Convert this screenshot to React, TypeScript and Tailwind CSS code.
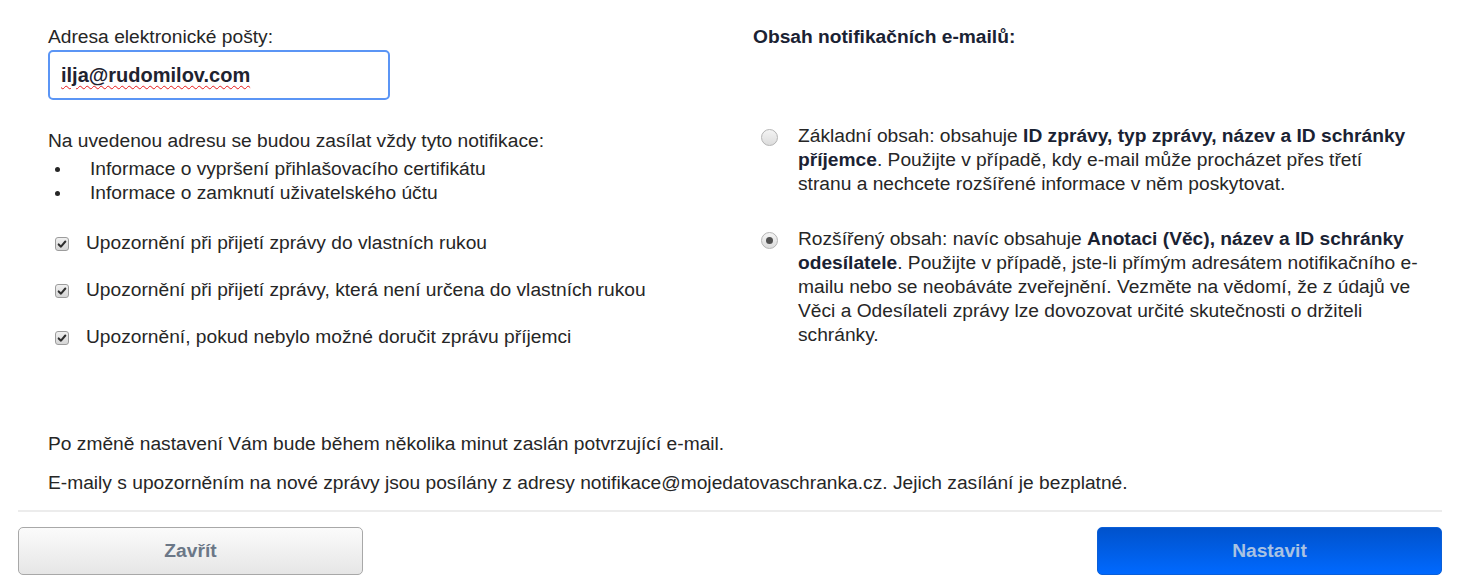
import React from 'react';

const font = { fontFamily: '"Liberation Sans", Arial, sans-serif' };

function Check() {
  return (
    <span className="mt-[1px] flex h-[14px] w-[14px] shrink-0 items-center justify-center rounded-[3px] border border-[#9c9c9c] bg-gradient-to-b from-[#f0f0f0] to-[#d6d6d6]">
      <svg viewBox="0 0 12 12" className="h-[10px] w-[10px]">
        <path d="M2 6.5 L4.8 9.2 L10 3" fill="none" stroke="#2e2e2e" strokeWidth="2.4" strokeLinecap="round" strokeLinejoin="round" />
      </svg>
    </span>
  );
}

function Radio({ checked }: { checked?: boolean }) {
  return (
    <span className="mt-[5px] flex h-[17px] w-[17px] shrink-0 items-center justify-center rounded-full border border-[#b4b4b4] bg-gradient-to-b from-[#f4f4f4] to-[#dcdcdc]">
      {checked && <span className="h-[7px] w-[7px] rounded-full bg-[#505050]" />}
    </span>
  );
}

const checks = [
  'Upozornění při přijetí zprávy do vlastních rukou',
  'Upozornění při přijetí zprávy, která není určena do vlastních rukou',
  'Upozornění, pokud nebylo možné doručit zprávu příjemci',
];

export default function App() {
  return (
    <div className="min-h-[585px] bg-white text-[19.2px] leading-6 text-[#262626]" style={font}>
      <div className="ml-[18px] w-[1424px] pt-[25px]">
        <div className="grid grid-cols-2">
          <div className="pl-[30px]">
            <div>Adresa elektronické pošty:</div>
            <div className="mt-[1px] flex h-[50px] w-[342px] items-center rounded-[5px] border-2 border-[#5b95f5] px-[11px] text-[20px] font-bold text-[#1f2330]">
              <span className="underline decoration-wavy decoration-[#e81818] decoration-1 underline-offset-[3px]">ilja@rudomilov.com</span>
            </div>
            <p className="mt-[29px]">Na uvedenou adresu se budou zasílat vždy tyto notifikace:</p>
            <ul className="mt-[4px]">
              <li className="flex items-center">
                <span className="ml-[7px] h-[5px] w-[5px] rounded-full bg-[#262626]" />
                <span className="ml-[30px]">Informace o vypršení přihlašovacího certifikátu</span>
              </li>
              <li className="flex items-center">
                <span className="ml-[7px] h-[5px] w-[5px] rounded-full bg-[#262626]" />
                <span className="ml-[30px]">Informace o zamknutí uživatelského účtu</span>
              </li>
            </ul>
            <div className="mt-[26px] flex flex-col gap-[23px]">
              {checks.map((c) => (
                <label key={c} className="flex items-center pl-[7px]">
                  <Check />
                  <span className="ml-[17px]">{c}</span>
                </label>
              ))}
            </div>
          </div>

          <div className="pl-[23px] pr-[22px]">
            <div className="font-bold text-[#1a2233]">Obsah notifikačních e-mailů:</div>
            <div className="mt-[75px] flex items-start pl-[8px]">
              <Radio />
              <p className="ml-[20px]">
                Základní obsah: obsahuje <b className="text-[#1a2233]">ID zprávy, typ zprávy, název a ID schránky příjemce</b>. Použijte v případě, kdy e-mail může procházet přes třetí stranu a nechcete rozšířené informace v něm poskytovat.
              </p>
            </div>
            <div className="mt-[31px] flex items-start pl-[8px]">
              <Radio checked />
              <p className="ml-[20px]">
                Rozšířený obsah: navíc obsahuje <b className="text-[#1a2233]">Anotaci (Věc), název a ID schránky odesílatele</b>. Použijte v případě, jste-li přímým adresátem notifikačního e-mailu nebo se neobáváte zveřejnění. Vezměte na vědomí, že z údajů ve Věci a Odesílateli zprávy lze dovozovat určité skutečnosti o držiteli schránky.
              </p>
            </div>
          </div>
        </div>

        <div className="mt-[83px] pl-[30px]">
          <p>Po změně nastavení Vám bude během několika minut zaslán potvrzující e-mail.</p>
          <p className="mt-[15px]">E-maily s upozorněním na nové zprávy jsou posílány z adresy notifikace@mojedatovaschranka.cz. Jejich zasílání je bezplatné.</p>
        </div>

        <div className="mt-[15px] h-[2px] bg-[#ececec]" />

        <div className="mt-[15px] flex justify-between">
          <button className="h-[48px] w-[345px] rounded-[5px] border border-[#a8a8a8] bg-gradient-to-b from-[#fbfbfb] to-[#e6e6e6] text-[19.2px] font-bold text-[#6b7787]">
            Zavřít
          </button>
          <button className="h-[48px] w-[345px] rounded-[5px] border border-[#0a5fd8] bg-gradient-to-b from-[#0052cc] to-[#0069ff] text-[19.2px] font-bold text-[#a9c2e2]">
            Nastavit
          </button>
        </div>
      </div>
    </div>
  );
}
